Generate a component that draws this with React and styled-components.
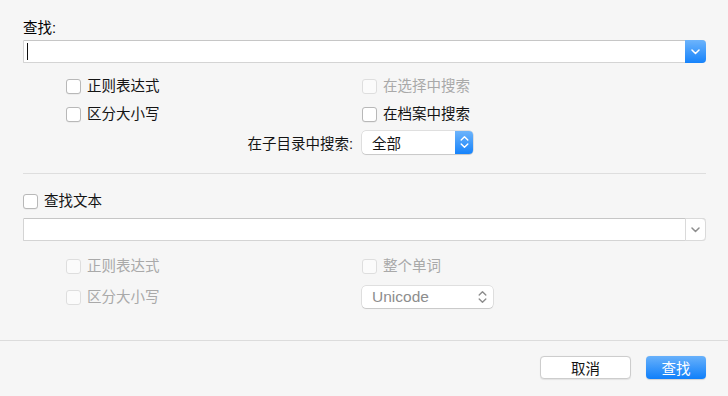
import React from 'react'
import styled, { createGlobalStyle } from 'styled-components'

const Global = createGlobalStyle`
  html, body { margin: 0; padding: 0; background: #f6f6f6; }
  * { box-sizing: border-box; }
`

const font = `"Liberation Sans", "Noto Sans CJK SC", sans-serif`

const Dialog = styled.div`
  width: 728px;
  height: 396px;
  display: flex;
  flex-direction: column;
  background: #f6f6f6;
  font-family: ${font};
  font-size: 14.5px;
  color: #141414;
  overflow: hidden;
`

const Section = styled.div`
  padding: ${p => p.$top}px 22px 0 23px;
`

const Label = styled.div`
  line-height: 20px;
  margin-bottom: 2px;
  color: #000;
`

const Combo = styled.div`
  display: flex;
  height: 23px;
  margin-top: ${p => p.$mt || 0}px;
  background: #fff;
  border: 1px solid #d4d4d4;
  border-top-color: #c6c6c6;
  border-right: none;
  border-radius: 1px 4px 4px 1px;
`

const ComboInput = styled.div`
  flex: 1;
  display: flex;
  align-items: center;
  padding-left: 3px;
`

const Caret = styled.span`
  width: 1px;
  height: 17px;
  background: #111;
`

const ComboButton = styled.div`
  width: 21px;
  margin: -1px 0;
  display: flex;
  align-items: center;
  justify-content: center;
  border-radius: 0 4px 4px 0;
  ${p => p.$blue ? `
    background: linear-gradient(#6db4fb, #1683fb);
  ` : `
    border: 1px solid #dadada;
    background: #fff;
  `}
`

const Options = styled.div`
  display: grid;
  grid-template-columns: 296px auto;
  grid-template-rows: ${p => p.$rows};
  margin: ${p => p.$mt}px 0 0 43px;
  align-items: center;
`

const Check = styled.label`
  display: flex;
  align-items: center;
  gap: 6px;
  color: ${p => p.$disabled ? '#a9a9a9' : '#141414'};
  line-height: 20px;
`

const Box = styled.span`
  width: 15px;
  height: 15px;
  border-radius: 3px;
  background: ${p => p.$disabled ? '#fbfbfb' : '#fff'};
  border: 1px solid ${p => p.$disabled ? '#dedede' : '#b8b8b8'};
  box-shadow: ${p => p.$disabled ? 'none' : '0 0.5px 0 rgba(0,0,0,0.08)'};
`

const RowLabel = styled.span`
  justify-self: end;
  padding-right: 9px;
`

const Popup = styled.div`
  display: flex;
  align-items: center;
  width: ${p => p.$w}px;
  height: ${p => p.$h}px;
  background: #fff;
  border-radius: 4px;
  box-shadow: 0 0 0 0.5px rgba(0,0,0,0.18), 0 1px 1px rgba(0,0,0,0.1);
  color: ${p => p.$disabled ? '#8d8d8d' : '#141414'};
  font-size: ${p => p.$disabled ? 15.5 : 14.5}px;
  overflow: hidden;
`

const PopupText = styled.span`
  flex: 1;
  padding-left: 10px;
`

const Stepper = styled.div`
  width: ${p => p.$blue ? 18 : 22}px;
  align-self: stretch;
  display: flex;
  align-items: center;
  justify-content: center;
  background: ${p => p.$blue ? 'linear-gradient(#6db4fb, #1683fb)' : 'transparent'};
`

const Divider = styled.div`
  height: 1px;
  background: #dedede;
  margin-top: 17px;
`

const Spacer = styled.div`
  flex: 1;
`

const Footer = styled.div`
  height: 56px;
  border-top: 1px solid #dcdcdc;
  padding: 15px 22px 0;
  display: flex;
  justify-content: flex-end;
  gap: 15px;
`

const Button = styled.button`
  width: ${p => p.$w}px;
  height: 23px;
  font-family: ${font};
  font-size: 14.5px;
  border-radius: 4px;
  padding: 0;
  ${p => p.$primary ? `
    color: #fff;
    border: none;
    background: linear-gradient(#68b1fb, #0f7ffa);
    box-shadow: 0 0.5px 1px rgba(0,0,0,0.15);
  ` : `
    color: #141414;
    background: #fff;
    border: 1px solid #cdcdcd;
    box-shadow: 0 0.5px 1px rgba(0,0,0,0.08);
  `}
`

const Down = ({ color }) => (
  <svg width="9" height="6" viewBox="0 0 9 6">
    <path d="M1 1l3.5 3.5L8 1" fill="none" stroke={color} strokeWidth="1.5" strokeLinecap="round" strokeLinejoin="round" />
  </svg>
)

const UpDown = ({ color }) => (
  <svg width="9" height="14" viewBox="0 0 9 14">
    <path d="M1.2 5l3.3-3.3L7.8 5M1.2 9l3.3 3.3L7.8 9" fill="none" stroke={color} strokeWidth="1.4" strokeLinecap="round" strokeLinejoin="round" />
  </svg>
)

const CheckItem = ({ children, disabled }) => (
  <Check $disabled={disabled}>
    <Box $disabled={disabled} />
    {children}
  </Check>
)

export default function App() {
  return (
    <Dialog>
      <Global />
      <Section $top={18}>
        <Label>查找:</Label>
        <Combo>
          <ComboInput><Caret /></ComboInput>
          <ComboButton $blue><Down color="#fff" /></ComboButton>
        </Combo>
        <Options $mt={9} $rows="28px 28px 28px">
          <CheckItem>正则表达式</CheckItem>
          <CheckItem disabled>在选择中搜索</CheckItem>
          <CheckItem>区分大小写</CheckItem>
          <CheckItem>在档案中搜索</CheckItem>
          <RowLabel>在子目录中搜索:</RowLabel>
          <Popup $w={111} $h={23}>
            <PopupText>全部</PopupText>
            <Stepper $blue><UpDown color="#fff" /></Stepper>
          </Popup>
        </Options>
        <Divider />
      </Section>
      <Section $top={17}>
        <Check>
          <Box />
          查找文本
        </Check>
        <Combo $mt={7}>
          <ComboInput />
          <ComboButton><Down color="#8e8e8e" /></ComboButton>
        </Combo>
        <Options $mt={11} $rows="28px 34px">
          <CheckItem disabled>正则表达式</CheckItem>
          <CheckItem disabled>整个单词</CheckItem>
          <CheckItem disabled>区分大小写</CheckItem>
          <Popup $w={131} $h={22} $disabled>
            <PopupText>Unicode</PopupText>
            <Stepper><UpDown color="#8e8e8e" /></Stepper>
          </Popup>
        </Options>
      </Section>
      <Spacer />
      <Footer>
        <Button $w={91}>取消</Button>
        <Button $w={60} $primary>查找</Button>
      </Footer>
    </Dialog>
  )
}
